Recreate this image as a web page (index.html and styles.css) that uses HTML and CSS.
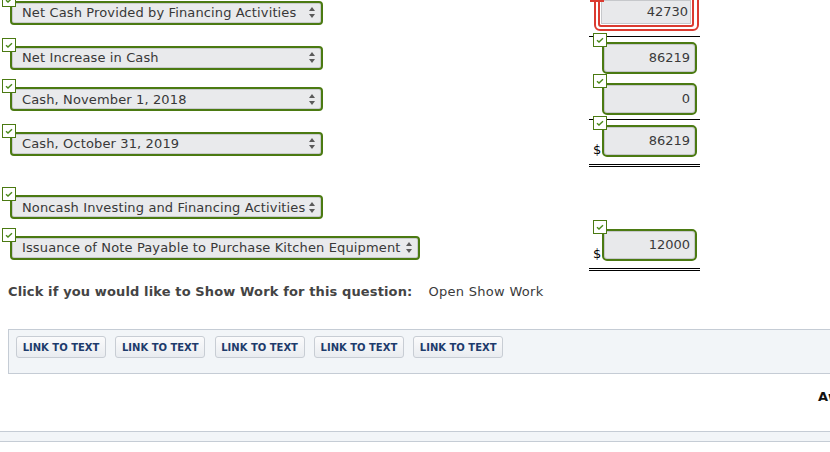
FILE: index.html
```html
<!DOCTYPE html>
<html>
<head>
<meta charset="utf-8">
<link rel="stylesheet" href="styles.css">
</head>
<body>
<div class="sheet">
  <div class="row">
    <div class="lc">
      <div class="fld">
        <span class="chk"><svg viewBox="0 0 14 14"><path d="M4 7.2 L6 9 L10 5.2"/></svg></span>
        <div class="sel w313"><span>Net Cash Provided by Financing Activities</span><svg class="arr" viewBox="0 0 6 11"><path d="M0 4 L3 0 L6 4 Z M0 7 L3 11 L6 7 Z"/></svg></div>
      </div>
    </div>
    <div class="rc r1">
      <div class="fld redbox">
        <span class="mark"></span>
        <div class="inp bad">42730</div>
      </div>
    </div>
  </div>

  <div class="row">
    <div class="lc">
      <div class="fld">
        <span class="chk"><svg viewBox="0 0 14 14"><path d="M4 7.2 L6 9 L10 5.2"/></svg></span>
        <div class="sel w313"><span>Net Increase in Cash</span><svg class="arr" viewBox="0 0 6 11"><path d="M0 4 L3 0 L6 4 Z M0 7 L3 11 L6 7 Z"/></svg></div>
      </div>
    </div>
    <div class="rc">
      <span class="cur"></span>
      <div class="fld">
        <span class="chk ichk"><svg viewBox="0 0 14 14"><path d="M4 7.2 L6 9 L10 5.2"/></svg></span>
        <div class="inp">86219</div>
      </div>
    </div>
  </div>

  <div class="row">
    <div class="lc">
      <div class="fld">
        <span class="chk"><svg viewBox="0 0 14 14"><path d="M4 7.2 L6 9 L10 5.2"/></svg></span>
        <div class="sel w313"><span>Cash, November 1, 2018</span><svg class="arr" viewBox="0 0 6 11"><path d="M0 4 L3 0 L6 4 Z M0 7 L3 11 L6 7 Z"/></svg></div>
      </div>
    </div>
    <div class="rc line">
      <span class="cur"></span>
      <div class="fld">
        <span class="chk ichk"><svg viewBox="0 0 14 14"><path d="M4 7.2 L6 9 L10 5.2"/></svg></span>
        <div class="inp">0</div>
      </div>
    </div>
  </div>

  <div class="row">
    <div class="lc">
      <div class="fld">
        <span class="chk"><svg viewBox="0 0 14 14"><path d="M4 7.2 L6 9 L10 5.2"/></svg></span>
        <div class="sel w313"><span>Cash, October 31, 2019</span><svg class="arr" viewBox="0 0 6 11"><path d="M0 4 L3 0 L6 4 Z M0 7 L3 11 L6 7 Z"/></svg></div>
      </div>
    </div>
    <div class="rc dbl">
      <span class="cur">$</span>
      <div class="fld">
        <span class="chk ichk"><svg viewBox="0 0 14 14"><path d="M4 7.2 L6 9 L10 5.2"/></svg></span>
        <div class="inp">86219</div>
      </div>
    </div>
  </div>

  <div class="head">
    <div class="fld">
      <span class="chk"><svg viewBox="0 0 14 14"><path d="M4 7.2 L6 9 L10 5.2"/></svg></span>
      <div class="sel w313"><span>Noncash Investing and Financing Activities</span><svg class="arr" viewBox="0 0 6 11"><path d="M0 4 L3 0 L6 4 Z M0 7 L3 11 L6 7 Z"/></svg></div>
    </div>
  </div>

  <div class="row">
    <div class="lc">
      <div class="fld">
        <span class="chk"><svg viewBox="0 0 14 14"><path d="M4 7.2 L6 9 L10 5.2"/></svg></span>
        <div class="sel w410"><span>Issuance of Note Payable to Purchase Kitchen Equipment</span><svg class="arr" viewBox="0 0 6 11"><path d="M0 4 L3 0 L6 4 Z M0 7 L3 11 L6 7 Z"/></svg></div>
      </div>
    </div>
    <div class="rc dbl">
      <span class="cur">$</span>
      <div class="fld">
        <span class="chk ichk"><svg viewBox="0 0 14 14"><path d="M4 7.2 L6 9 L10 5.2"/></svg></span>
        <div class="inp">12000</div>
      </div>
    </div>
  </div>
</div>

<p class="showwork"><b>Click if you would like to Show Work for this question:</b><a class="open">Open Show Work</a></p>

<div class="links">
  <span class="btn">LINK TO TEXT</span>
  <span class="btn">LINK TO TEXT</span>
  <span class="btn">LINK TO TEXT</span>
  <span class="btn">LINK TO TEXT</span>
  <span class="btn">LINK TO TEXT</span>
</div>

<div class="award">Award: 10 out of 10.00 points</div>

<div class="band"></div>
</body>
</html>
```

FILE: styles.css
```css
html, body {
  margin: 0;
  padding: 0;
  background: #fff;
  overflow: hidden;
}
body {
  width: 830px;
  height: 452px;
  font-family: "DejaVu Sans", Verdana, sans-serif;
  font-size: 13px;
  color: #333;
}
.sheet {
  margin-top: -12px;
}
.row {
  display: grid;
  grid-template-columns: 589px 111px;
  align-items: center;
}
.lc {
  padding-left: 10px;
}
.fld {
  position: relative;
}
.chk {
  position: absolute;
  left: -8px;
  top: -8px;
  width: 14px;
  height: 14px;
  box-sizing: border-box;
  background: #fff;
  border: 1px solid #4b7a12;
  z-index: 2;
}
.chk svg {
  position: absolute;
  left: -1px;
  top: -1px;
  width: 14px;
  height: 14px;
}
.chk path {
  fill: none;
  stroke: #4b8a1a;
  stroke-width: 1.4;
}
.ichk {
  left: -9px;
  top: -9px;
}
.sel {
  box-sizing: border-box;
  height: 24px;
  border: 2px solid #4b7a12;
  border-radius: 4px;
  background: #e9eaec;
  box-shadow: inset 0 0 0 1px #c9cbce;
  display: flex;
  align-items: center;
  justify-content: space-between;
  padding: 0 6px 0 10px;
  white-space: nowrap;
  color: #383838;
  letter-spacing: 0.13px;
}
.w313 { width: 313px; }
.w410 { width: 410px; }
.arr {
  width: 6px;
  height: 11px;
  flex: none;
}
.arr path {
  fill: #5a5a5a;
}
.rc {
  display: flex;
  align-items: flex-end;
  padding: 5px 0 4px 4px;
}
.rc.line {
  border-bottom: 1px solid #000;
}
.rc.dbl {
  padding-bottom: 7px;
  border-bottom: 3px double #000;
}
.rc.r1 {
  padding: 5px 0 5px 5px;
  border-bottom: 1px solid #000;
}
.cur {
  width: 9px;
  flex: none;
  color: #000;
  line-height: 14px;
}
.inp {
  box-sizing: border-box;
  width: 95px;
  height: 32px;
  border: 2px solid #4b7a12;
  border-radius: 5px;
  background: #e8e9eb;
  box-shadow: inset 0 0 0 1px #c6c8cb;
  text-align: right;
  padding-right: 5px;
  line-height: 28px;
  color: #3a3a3a;
}
.redbox {
  box-sizing: border-box;
  width: 105px;
  height: 38px;
  border: 2px solid #db3a30;
  border-radius: 6px;
  padding: 2px 3px 2px 2px;
}
.inp.bad {
  width: 96px;
  height: 30px;
  line-height: 26px;
  border: 2px solid #db3a30;
  border-radius: 3px;
  box-shadow: inset 0 0 0 1px #fff, inset 0 0 0 2px #c6c8cb;
  padding-right: 4px;
}
.mark {
  position: absolute;
  left: -6px;
  top: -9px;
  width: 14px;
  height: 16px;
  box-sizing: border-box;
  border: 2px solid #db3a30;
  background: #fff;
  z-index: 2;
}
.head {
  padding: 28px 0 5px 10px;
}
.showwork {
  margin: 13px 0 0 8px;
  line-height: 16px;
  color: #444;
}
.showwork b {
  font-weight: bold;
  letter-spacing: 0.13px;
}
.open {
  margin-left: 16px;
  color: #3a3a3a;
  letter-spacing: 0.3px;
}
.links {
  margin: 29px 0 0 8px;
  width: 860px;
  box-sizing: border-box;
  background: #f2f5f8;
  border: 1px solid #c5ccd5;
  padding: 6px 7px 15px;
  display: flex;
  gap: 9.3px;
}
.btn {
  box-sizing: border-box;
  width: 90px;
  height: 22px;
  border: 1px solid #c8cdd4;
  border-radius: 3px;
  background: linear-gradient(#fbfbfc, #e9ecf0);
  font-size: 10px;
  font-weight: bold;
  color: #1d3b6c;
  display: flex;
  align-items: center;
  justify-content: center;
}
.award {
  margin-top: 15px;
  padding-left: 818px;
  white-space: nowrap;
  font-weight: bold;
  color: #111;
  line-height: 16px;
}
.band {
  margin-top: 26px;
  height: 9px;
  background: #f2f5f8;
  border-top: 1px solid #c5ccd5;
  border-bottom: 1px solid #c5ccd5;
}
```
